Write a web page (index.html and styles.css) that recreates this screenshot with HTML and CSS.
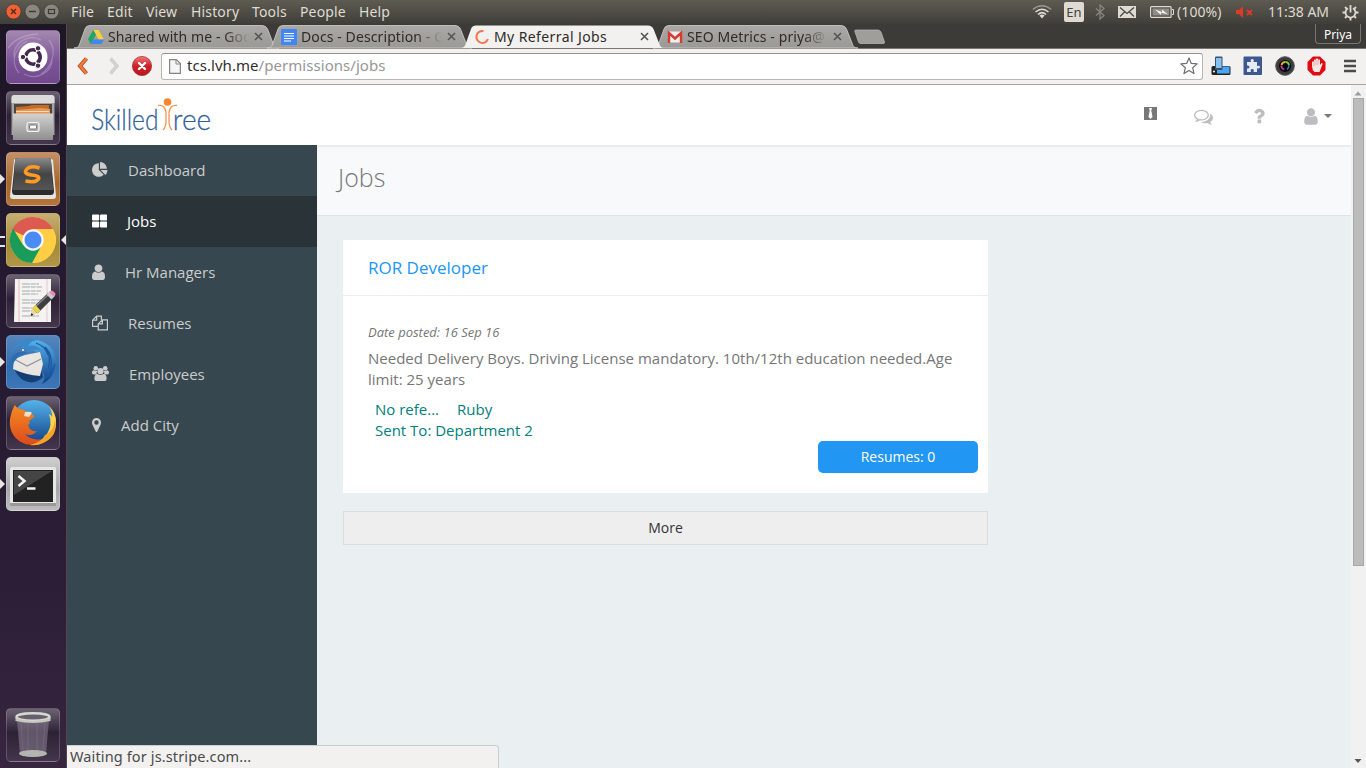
FILE: index.html
```html
<!DOCTYPE html>
<html lang="en">
<head>
<meta charset="utf-8">
<title>My Referral Jobs</title>
<link rel="stylesheet" href="styles.css">
</head>
<body>
<svg class="defs" width="0" height="0">
  <defs>
    <linearGradient id="tabg" x2="0" y2="1"><stop offset="0" stop-color="#a9a8a5"/><stop offset="1" stop-color="#9a9995"/></linearGradient>
    <linearGradient id="silver" x2="0" y2="1"><stop offset="0" stop-color="#d2d2d2"/><stop offset="1" stop-color="#8f8f8f"/></linearGradient>
    <linearGradient id="dark" x2="0" y2="1"><stop offset="0" stop-color="#8a8a8a"/><stop offset=".5" stop-color="#444"/><stop offset="1" stop-color="#555"/></linearGradient>
    <linearGradient id="blue" x2="0" y2="1"><stop offset="0" stop-color="#55b3ea"/><stop offset="1" stop-color="#113f86"/></linearGradient>
    <linearGradient id="fox" x2="0" y2="1"><stop offset="0" stop-color="#f58a24"/><stop offset="1" stop-color="#dd4a1c"/></linearGradient>
    <linearGradient id="red" x2="0" y2="1"><stop offset="0" stop-color="#f07a74"/><stop offset=".5" stop-color="#cc2229"/><stop offset="1" stop-color="#b8161e"/></linearGradient>
    <path id="tab" d="M0 24C4 24 5 22 6 19L11 5Q12 1.500 16 1.500H188Q192 1.500 193.500 5L199 19C200 22 201 24 205 24Z"/>
    <path id="user" d="M1536 1399q0 109-62.500 187t-150.500 78h-854q-88 0-150.500-78t-62.500-187q0-85 8.500-160.500t31.500-152 58.500-131 94-89 134.500-34.500q131 128 313 128t313-128q76 0 134.500 34.500t94 89 58.500 131 31.500 152 8.500 160.500zm-256-887q0 159-112.500 271.500t-271.500 112.500-271.500-112.500-112.500-271.500 112.500-271.500 271.500-112.500 271.500 112.500 112.500 271.500z"/>
  </defs>
</svg>

<header class="menubar">
  <svg class="winbtns" width="60" height="24" viewBox="0 0 60 24">
    <circle cx="13.500" cy="11.500" r="7.500" fill="#ee6238" stroke="#3a2f28" stroke-width=".6"/><path d="M11 9l5 5M16 9l-5 5" stroke="#5a2514" stroke-width="1.400"/>
    <circle cx="32.500" cy="11.500" r="7.500" fill="#8a8780" stroke="#35332e" stroke-width=".6"/><path d="M29 11.500h7" stroke="#3b3a36" stroke-width="1.400"/>
    <circle cx="51.500" cy="11.500" r="7.500" fill="#8a8780" stroke="#35332e" stroke-width=".6"/><rect x="48.500" y="9.500" width="6" height="4" fill="none" stroke="#3b3a36" stroke-width="1.200"/>
  </svg>
  <nav class="menus"><span>File</span><span>Edit</span><span>View</span><span>History</span><span>Tools</span><span>People</span><span>Help</span></nav>
  <div class="tray">
    <svg width="20" height="16" viewBox="0 0 20 16" fill="none" stroke="#dfdbd2" stroke-width="1.500"><path d="M.8 5.500Q10-1.800 19.200 5.500" opacity=".5"/><path d="M3.500 8Q10 2.500 16.500 8M6 10.500Q10 6.700 14 10.500"/><path d="M7.500 11.500L10 14.500l2.500-3Q10 9.500 7.500 11.500z" fill="#dfdbd2" stroke="none"/></svg>
    <span class="lang">En</span>
    <svg class="bt" width="10" height="16" viewBox="0 0 10 16" fill="none" stroke="#8a8881" stroke-width="1.200"><path d="M1 4.500l8 7-4 3.500V1l4 3.500-8 7"/></svg>
    <svg class="mail" width="18" height="12" viewBox="0 0 18 12"><rect width="18" height="12" fill="#dfdbd2"/><path d="M2 1.500l7 6 7-6M2 10.500l4.500-4.500M16 10.500L11.500 6" fill="none" stroke="#4a4842" stroke-width="1.300"/></svg>
    <svg class="batt" width="24" height="12" viewBox="0 0 24 12"><rect x=".6" y=".6" width="20.500" height="10.800" rx="1" fill="none" stroke="#dfdbd2" stroke-width="1.200"/><rect x="2.500" y="2.500" width="16.700" height="7" fill="#8f8d87"/><path d="M22 3.500h1.500v5H22" fill="none" stroke="#dfdbd2"/><path d="M5 3.500l7 2.500V3.500l6 5-7-2V9z" fill="#f4f2ec"/></svg>
    <span class="pct">(100%)</span>
    <svg class="vol" width="18" height="12" viewBox="0 0 18 12"><path d="M0 4h3l4-4v12L3 8H0z" fill="#e03a24"/><path d="M11 4l5 5M16 4l-5 5" stroke="#e03a24" stroke-width="1.800"/></svg>
    <span class="clock">11:38 AM</span>
    <svg class="gear" width="17" height="17" viewBox="0 0 17 17" fill="none" stroke="#dfdbd2"><path d="M6 4.200a5 5 0 1 0 5 0" stroke-width="1.800"/><path d="M8.500 1v7.500" stroke-width="1.800"/><path d="M8.500 14v2.500M.5 8.500h3M13.500 8.500h3M3 3l1.800 1.800M14 3l-1.800 1.800M3 14l1.800-1.800M14 14l-1.800-1.800" stroke-width="1.900"/></svg>
  </div>
</header>

<div class="desktop">
  <aside class="launcher">
    <div class="tile purple"><svg viewBox="0 0 54 54"><g fill="none" stroke="#d9c5e6" opacity=".35" stroke-width="1.300"><path d="M8 27C7 13 22 3 35 10M46 28c1 14-15 23-28 16M13 43C3 31 10 17 21 11M43 10c9 11 2 28-8 34M2 18Q12 5 32 4"/></g><circle cx="27" cy="27" r="14.500" fill="#fff"/><circle cx="27" cy="27" r="7.200" fill="none" stroke="#45284f" stroke-width="3.600" stroke-dasharray="13.600 1.480" stroke-dashoffset="6.800"/><g fill="#45284f" stroke="#fff" stroke-width="1"><circle cx="17" cy="27" r="2.700"/><circle cx="32" cy="18.300" r="2.700"/><circle cx="32" cy="35.700" r="2.700"/></g></svg></div>
    <div class="tile glass"><svg viewBox="0 0 54 54"><path d="M5.500 7q0-3 3-3h37q3 0 3 3v37h-43z" fill="#a4a4a4"/><path d="M5.500 7q0-3 3-3h37q3 0 3 3v5h-43z" fill="#dcdcdc"/><path d="M8 13h38v11H8z" fill="#4f453c"/><path d="M10 16l13-1 2-1h18v9H10z" fill="#c66a27"/><path d="M10 19l24-2 10 1v5H10z" fill="#e49a55"/><path d="M10 20.500h33" stroke="#f4dab5"/><path d="M7 22.500h40V49H7z" fill="url(#silver)"/><rect x="21" y="31.500" width="12" height="9" rx="2" fill="#b0b0b0" stroke="#f3f3f3" stroke-width="1.200"/><rect x="23.500" y="34" width="7" height="4" rx="1" fill="#fff" stroke="#777"/></svg></div>
    <div class="tile brown run"><svg viewBox="0 0 54 54"><path d="M8 8q0-1 1-1h36q1 0 2 1l3 36q0 3-3 3H7q-3 0-3-3z" fill="#e6e4e1"/><path d="M9 9q0-3 3-3h30q3 0 3 3l3 30q0 4-3 4H9q-3 0-3-4z" fill="#2c2c2c"/><path d="M9 9q0-3 3-3h30q3 0 3 3l2 29H7z" fill="url(#dark)"/><path d="M33.500 16Q24 13 20.500 17.500t5.500 5.500 6 4.500-12.500 1.500" fill="none" stroke="#ff9824" stroke-width="3.600"/></svg></div>
    <div class="tile gold run2 focus"><svg viewBox="0 0 54 54"><circle cx="27" cy="27" r="23" fill="#ffd54a"/><path d="M27 27L6 17A23 23 0 0 1 47 16H27z" fill="#dd5a50"/><path d="M7 15.500A23 23 0 0 0 27 50L36 32 27 37 17 32z" fill="#199b5a"/><path d="M36 32L26 50A23 23 0 0 0 47 16H28z" fill="#ffce44"/><circle cx="27" cy="27" r="10.700" fill="#f7f7f7"/><circle cx="27" cy="27" r="8.500" fill="#4b8bf5"/></svg></div>
    <div class="tile glass"><svg viewBox="0 0 54 54"><path d="M9 5h36v43H8z" fill="#f3f3f1"/><path d="M13 5v43" stroke="#f4b6b6"/><path d="M41 5v43" stroke="#e6c8ce"/><path d="M16 10h17M16 13h20M16 17h19M16 20h16M16 26h20M16 29h18M16 34h10M16 37h10M16 42h17" stroke="#c2c2c5" stroke-width="1.500" stroke-dasharray="8 .7 5 .7"/><path d="M24.500 42l2-8 5 5z" fill="#f0d59a"/><path d="M24.500 42l1-3 2 2z" fill="#222"/><path d="M26.500 34L42 19l5 5-15.500 15.500z" fill="#3f3f42"/><path d="M28 34l15-14" stroke="#858589" stroke-width="1.500"/><path d="M26.500 34l3-3 5 5.500-3 3z" fill="#e6d74c"/><path d="M40.500 20.500l3-3 5 5-3 3z" fill="#ccc"/><path d="M43 18q3-3 5 0 3 2 0 5z" fill="#e58bb6"/></svg></div>
    <div class="tile sky run"><svg viewBox="0 0 54 54"><path d="M8 33L34 30 37 42Q28 51 17 45 11 41 8 33z" fill="#173e73"/><path d="M15 12Q20 3 31 5 49 9 50 27 49 43 36 49q4-6 2-10-3-3-2-9 2-10-8-14z" fill="url(#blue)"/><path d="M8 24L19 20l15-3 3 12-3 12Q20 40 7 34z" fill="#e9e5e1"/><path d="M8 24l13 7 14-7" fill="none" stroke="#8f949c" stroke-width="1.300"/><path d="M4 25Q5 11 16 12q4 0 6 6 7-6 14-2Q30 9 22 11 25 5 32 5 18 2 12 8 4 13 4 25z" fill="#3b88c9"/><path d="M5 24Q10 14 22 18q-9 1-14 9-3 5-1 9-4-5-2-12z" fill="#2a6db3"/><path d="M34 10Q47 16 42 34M39 12q10 9 4 30M30 8q9 3 12 12M38 44q8-5 11-15" fill="none" stroke="#1b5aa5" stroke-width="1.300"/><circle cx="17" cy="15" r="1" fill="#fff"/></svg></div>
    <div class="tile glass"><svg viewBox="0 0 54 54"><circle cx="28" cy="26" r="22" fill="url(#blue)"/><path d="M42 9Q53 20 49 33T28 49q10-4 13-11 6-9 2-20 3 1 3 4 1-7-4-13z" fill="#ffd451"/><path d="M9 9Q6 13 4 23c-2 15 9 26 23 26q12 0 18-9-8 5-17 3-6-1-9-5 7 3 12-3-7 1-9-6 3-2 1-4l5-4q1-3-6-3-3-4-6-5-4 1-7-4z" fill="url(#fox)"/><path d="M39 39q9-4 10-16 4 17-12 24-6 3-13 2 12-3 15-10z" fill="#f6a52c"/><path d="M19 16q6-1 7 1l-3 4-5-1z" fill="#f8dcc1"/></svg></div>
    <div class="tile grey run"><svg viewBox="0 0 54 54"><rect x="4" y="10" width="46" height="38" rx="2" fill="#e7e7e7"/><path d="M4 46h46v3H4z" fill="#999"/><rect x="7" y="13" width="40" height="32" fill="#222"/><path d="M8 14h38L8 38z" fill="#454545"/><path d="M12.500 19l6 5-6 5M21 31.500h8.500" fill="none" stroke="#f3f3f3" stroke-width="2.500"/></svg></div>
    <div class="tile glass trash"><svg viewBox="0 0 54 54"><path d="M11 12h32l-3 34q-13 5-26 0z" fill="#83788a" opacity=".6"/><path d="M15 13l2 30M22 14v30M31 14v30M39 13l-2 30" stroke="#a69cac" opacity=".2"/><ellipse cx="27" cy="45.500" rx="14" ry="3.500" fill="#b4b4b0"/><ellipse cx="27" cy="9" rx="16.500" ry="3.700" fill="#67606c" stroke="#d8d8d3" stroke-width="2.500"/><path d="M9.500 10q17 6 35 0v3q-17 4-35 0z" fill="#c7c7c1"/></svg></div>
  </aside>

  <main class="browser">
    <div class="tabs">
      <div class="tab"><svg class="shape" width="205" height="25"><use href="#tab" fill="url(#tabg)" stroke="#d2d1ce" stroke-width=".8"/></svg>
        <svg class="fav" width="16" height="16" viewBox="0 0 16 16"><path d="M5.300 1h5.300L16 10.500h-5.300z" fill="#fdcf3c"/><path d="M5.300 1L8 5.700 2.700 15 0 10.300z" fill="#1fa564"/><path d="M5.300 10.500H16L13.300 15H2.700z" fill="#4285f4"/></svg>
        <span class="t t1">Shared with me - Goo</span><svg class="x" width="9" height="9" viewBox="0 0 9 9"><path d="M1 1l7 7M8 1L1 8"/></svg></div>
      <div class="tab"><svg class="shape" width="205" height="25"><use href="#tab" fill="url(#tabg)" stroke="#d2d1ce" stroke-width=".8"/></svg>
        <svg class="fav" width="16" height="16" viewBox="0 0 16 16"><rect width="16" height="16" rx="1" fill="#4285f4"/><path d="M3 4.500h10M3 7h10M3 9.500h10M3 12h7" stroke="#fff" stroke-width="1.200"/></svg>
        <span class="t t2">Docs - Description - G</span><svg class="x" width="9" height="9" viewBox="0 0 9 9"><path d="M1 1l7 7M8 1L1 8"/></svg></div>
      <div class="tab active"><svg class="shape" width="205" height="25"><use href="#tab" fill="#f2f1f0"/></svg>
        <svg class="fav" width="16" height="16" viewBox="0 0 16 16"><path d="M9.500 2A6 6 0 1 0 14 10" fill="none" stroke="#f4764a" stroke-width="2"/></svg>
        <span class="t t3">My Referral Jobs</span><svg class="x" width="9" height="9" viewBox="0 0 9 9"><path d="M1 1l7 7M8 1L1 8"/></svg></div>
      <div class="tab under"><svg class="shape" width="205" height="25"><use href="#tab" fill="url(#tabg)" stroke="#d2d1ce" stroke-width=".8"/></svg>
        <svg class="fav" width="16" height="16" viewBox="0 0 16 16"><rect x="1" y="2.500" width="14" height="11" fill="#eee"/><path d="M2 14V4l6 5.500L14 4v10" fill="none" stroke="#d93a30" stroke-width="2.400"/></svg>
        <span class="t t4">SEO Metrics - priya@</span><svg class="x" width="9" height="9" viewBox="0 0 9 9"><path d="M1 1l7 7M8 1L1 8"/></svg></div>
      <svg class="newtab" width="32" height="15"><path d="M1.500 1H24Q26 1 27 3l3.500 10Q31 14.500 29 14.500H7Q5 14.500 4.500 13L.8 2.500Q.5 1 1.500 1z" fill="#9f9e9a" stroke="#bdbcb9" stroke-width=".7"/></svg>
      <div class="profile">Priya</div>
    </div>
    <div class="toolbar">
      <svg class="back" width="12" height="18" viewBox="0 0 12 18"><path d="M9.500 1.500L3 9l6.500 7.500" fill="none" stroke="#b9481c" stroke-width="4"/><path d="M9.500 1.500L3 9l6.500 7.500" fill="none" stroke="#f07a3e" stroke-width="2.400"/></svg>
      <svg class="fwd" width="12" height="18" viewBox="0 0 12 18"><path d="M2.500 1.500L9 9l-6.500 7.500" fill="none" stroke="#d3d1ce" stroke-width="3.500"/></svg>
      <svg class="stop" width="20" height="20" viewBox="0 0 20 20"><circle cx="10" cy="10" r="9.600" fill="url(#red)" stroke="#a81c22" stroke-width=".7"/><path d="M7 7l6 6M13 7l-6 6" stroke="#fff" stroke-width="2.400" stroke-linecap="round"/></svg>
      <div class="omni">
        <svg width="12" height="15" viewBox="0 0 12 15"><path d="M.6 .6h6.800L11.400 4.600V14.400H.6z" fill="#f5f5f5" stroke="#858585" stroke-width="1.200"/><path d="M7 .6V5h4.400" fill="none" stroke="#858585"/></svg>
        <span class="url">tcs.lvh.me<i>/permissions/jobs</i></span>
        <svg class="star" width="18" height="18" viewBox="0 0 18 18"><path d="M9 1l2.300 5.400 5.900.5-4.500 3.900L14 16.600 9 13.500l-5 3.100 1.300-5.800L.8 6.900l5.900-.5z" fill="#fff" stroke="#6d6d6d" stroke-width="1.200" stroke-linejoin="round"/></svg>
      </div>
      <div class="exts">
        <svg width="20" height="20" viewBox="0 0 20 20"><rect x=".5" y="10" width="19" height="9" rx="1.500" fill="#222"/><rect x="6" y="10.500" width="12.500" height="7" fill="#4aa5f5"/><rect x="4" y=".5" width="7.500" height="13.500" rx="1" fill="#3c5268"/><rect x="5" y="2" width="5.500" height="10" fill="#86c1f5"/><circle cx="3" cy="15.500" r="1" fill="#fff"/></svg>
        <svg width="20" height="20" viewBox="0 0 20 20"><rect x=".5" y=".5" width="18.500" height="18.500" rx="1" fill="#3d5791"/><path d="M4 6h4q-1-3 1.200-3T10.500 6H14v4q3-1 3 1t-3 1.200V16h-3.500q1-3-1.300-3T8 16H4v-3.500q2.500.5 2.500-1.500T4 9.500z" fill="#e5eaf3"/></svg>
        <svg width="20" height="20" viewBox="0 0 20 20"><circle cx="10" cy="10" r="9.300" fill="#3c3c3c" stroke="#555" stroke-width="1"/><circle cx="10" cy="10" r="6" fill="#060606"/><path d="M6.500 9a4 4 0 0 1 4-3" fill="none" stroke="#e0b13a" stroke-width="1.800"/><path d="M10.500 6q3 0 3.500 3" fill="none" stroke="#7ccf3a" stroke-width="1.800"/><path d="M14 9q0 3-2 4.500" fill="none" stroke="#2a7fd0" stroke-width="1.500"/><path d="M6.300 9.500q0 3 3 4" fill="none" stroke="#cd2e9f" stroke-width="1.800"/></svg>
        <svg width="20" height="20" viewBox="0 0 20 20"><path d="M6 .5h7L18.500 6v8L13 19.500H6L.5 14V6z" fill="#e00b12"/><path d="M5 10V6q1-1.500 2 0V4q1-1.500 2 0V3q1-1.500 2 0v1q1-1.500 2 0v5l1.500-2q1.500 0 1 1.200L12.500 16h-5Q5 14 5 10z" fill="#f7e6e6"/><path d="M7 5v5M9 4v5M11 4v5" stroke="#e39999" stroke-width=".7"/></svg>
        <svg width="14" height="14" viewBox="0 0 14 14"><path d="M1 2h12M1 7h12M1 12h12" stroke="#4b4b4b" stroke-width="2.700"/></svg>
      </div>
    </div>
    <div class="view">
      <div class="page">
        <header class="apphead">
          <svg class="logo" width="122" height="36" viewBox="0 0 122 36"><g class="word" transform="scale(.8 1)"><text x="-1" y="33" textLength="84" lengthAdjust="spacingAndGlyphs">Skilled</text><text x="101" y="33" textLength="48" lengthAdjust="spacingAndGlyphs">ree</text></g><circle cx="75.500" cy="5" r="3.800" fill="#f5862e"/><path d="M66 8.500q7-1 8 7V24q0 6-3 9M85 8.500q-7-1-8 7V24q0 6 3 9" fill="none" stroke="#f79450" stroke-width="1.300"/></svg>
          <nav class="actions">
            <svg width="13" height="13" viewBox="0 0 13 13"><rect width="13" height="13" fill="#777"/><path d="M5 1h3l-.7 2.500L8.500 10l-2 2-2-2 1.200-6.500z" fill="#fff"/></svg>
            <svg class="chat" width="19" height="19" viewBox="0 0 1792 1792" fill="#bdbdc1"><path d="M704 384q-153 0-286 52t-211.500 141-78.500 191q0 82 53 158t149 132l97 56-35 84q34-20 62-39l44-31 53 10q78 14 153 14 153 0 286-52t211.500-141 78.500-191-78.500-191-211.500-141-286-52zm0-128q191 0 353.500 68.500t256.500 186.500 94 257-94 257-256.500 186.500-353.500 68.500q-86 0-176-16-124 88-278 128-36 9-86 16h-3q-11 0-20.500-8t-11.500-21q-1-3-1-6.500t.5-6.500 2-6l2.500-5 3.500-5.500 4-5 4.500-5 4-4.500q5-6 23-25t26-29.500 22.500-29 25-38.500 20.500-44q-124-72-195-177t-71-224q0-139 94-257t256.500-186.500 353.500-68.500zm822 1169q10 24 20.500 44t25 38.500 22.500 29 26 29.500 23 25q1 1 4 4.500t4.500 5 4 5 3.500 5.500l2.500 5 2 6 .5 6.500-1 6.500q-3 14-13 22t-22 7q-50-7-86-16-154-40-278-128-90 16-176 16-271 0-472-132 58 4 88 4 161 0 309-45t264-129q125-92 192-212t67-254q0-77-23-152 129 71 204 178t75 230q0 120-71 224.500t-195 176.500z"/></svg>
            <svg class="help" width="20" height="20" viewBox="0 0 1792 1792" fill="#bdbdc1"><path d="M1088 1256v240q0 16-12 28t-28 12h-240q-16 0-28-12t-12-28v-240q0-16 12-28t28-12h240q16 0 28 12t12 28zm316-600q0 54-15.500 101t-35 76.500-55 59.500-57.500 43.500-61 35.500q-41 23-68.500 65t-27.500 67q0 17-12 32.500t-28 15.500h-240q-15 0-25.500-18.500t-10.500-37.500v-45q0-83 65-156.500t143-108.500q59-27 84-56t25-76q0-42-46.500-74t-107.500-32q-65 0-108 29-35 25-107 115-13 16-31 16-12 0-25-8l-164-125q-13-10-15.500-25t5.500-28q160-266 464-266 80 0 161 31t146 83 106 127.500 41 158.500z"/></svg>
            <svg class="me" width="20" height="19" viewBox="0 0 1792 1792" fill="#bdbdc1"><use href="#user"/></svg>
            <svg class="caret" width="8" height="4"><path d="M0 0h8L4 4z" fill="#777"/></svg>
          </nav>
        </header>
        <div class="body">
          <nav class="side">
            <a><svg width="16" height="16" viewBox="0 0 1792 1792"><path d="M768 890l546 546q-106 108-247.500 168t-298.500 60q-209 0-385.500-103t-279.500-279.500-103-385.500 103-385.500 279.500-279.500 385.500-103v762zm187 6h773q0 157-60 298.500t-168 247.500zm709-128h-768v-768q209 0 385.500 103t279.500 279.500 103 385.500z"/></svg>Dashboard</a>
            <a class="on"><svg width="15" height="16" viewBox="0 0 15 16"><rect y="1.500" width="7.200" height="6" rx="1"/><rect x="8" y="1.500" width="7.200" height="6" rx="1"/><rect y="8.500" width="7.200" height="6" rx="1"/><rect x="8" y="8.500" width="7.200" height="6" rx="1"/></svg>Jobs</a>
            <a><svg width="13" height="16" viewBox="256 90 1280 1576"><use href="#user"/></svg>Hr Managers</a>
            <a><svg width="16" height="16" viewBox="0 0 17 16"><path d="M6.500 11.500H.6V5L5 .6h5v4M5 .6V5H.6M11 4.600h5.400v10.800H6.600V9zM11 4.600V9H6.600" fill="none" stroke="#ccc" stroke-width="1.300"/></svg>Resumes</a>
            <a><svg width="17" height="17" viewBox="0 0 18 17"><circle cx="4" cy="3" r="2.400"/><circle cx="14" cy="3" r="2.400"/><path d="M0 8Q0 5 2 5q2 1.400 4 .5-2 2-.8 4H2Q0 9.500 0 8zM18 8q0-3-2-3-2 1.400-4 .5 2 2 .8 4H16q2 0 2-1.500z"/><circle cx="9" cy="6" r="3.300"/><path d="M2.500 14q0-5 3.500-5 3 2.200 6 0 3.500 0 3.500 5 0 2.500-2 2.500h-9q-2 0-2-2.500z"/></svg>Employees</a>
            <a><svg width="9" height="16" viewBox="0 0 9 16"><path fill-rule="evenodd" d="M4.500 1A4.500 4.500 0 0 1 9 5.500q0 1.300-.5 2.300L5.300 14.500q-.8 1-1.600 0L.5 7.800Q0 7 0 5.500A4.500 4.500 0 0 1 4.500 1zm0 2.300a2.200 2.200 0 1 0 0 4.400 2.200 2.200 0 0 0 0-4.400z"/></svg>Add City</a>
          </nav>
          <section class="content">
            <h1>Jobs</h1>
            <div class="inner">
              <article class="card">
                <h2>ROR Developer</h2>
                <div class="cardbody">
                  <p class="date">Date posted: 16 Sep 16</p>
                  <p class="desc">Needed Delivery Boys. Driving License mandatory. 10th/12th education needed.Age limit: 25 years</p>
                  <div class="meta"><div><span>No refe...</span><span class="skill">Ruby</span></div><div>Sent To: Department 2</div></div>
                  <button class="resumes">Resumes: 0</button>
                </div>
              </article>
              <button class="more">More</button>
            </div>
          </section>
        </div>
      </div>
      <div class="scroll"><svg width="15" height="13"><path d="M3.500 10.500h7L7 6.500z" fill="#9a9a9a"/></svg><div class="thumb"></div><svg class="down" width="15" height="13"><path d="M3.500 4h7L7 8z" fill="#555"/></svg></div>
      <div class="status">Waiting for js.stripe.com...</div>
    </div>
  </main>
</div>
</body>
</html>
```
FILE: styles.css
```css
* { box-sizing: border-box; }
html, body { margin: 0; height: 768px; overflow: hidden; }
body { display: flex; flex-direction: column; font-family: "Open Sans", "Noto Sans", sans-serif; }
svg { display: block; flex: none; }
.defs { position: absolute; }

.menubar { height: 24px; flex: none; display: flex; background: linear-gradient(#5e5b51, #3f3e39); color: #dfdbd2; font: 14px/24px "Noto Sans", sans-serif; white-space: nowrap; }
.winbtns { margin-right: 11px; }
.menus { display: grid; grid-template-columns: 36px 39px 45px 61px 48px 59px 40px; letter-spacing: .15px; }
.tray { margin-left: auto; display: flex; align-items: center; padding-right: 7px; }
.lang { width: 20px; height: 20px; margin-left: 12px; border-radius: 2px; background: #dfdbd2; color: #45433e; font-size: 13px; line-height: 20px; text-align: center; }
.bt { margin-left: 11px; }
.mail { margin-left: 13px; }
.batt { margin-left: 14px; }
.pct { width: 49px; margin-left: 3px; font-size: 14px; letter-spacing: .1px; }
.vol { margin-left: 10px; }
.clock { width: 64px; margin-left: 14px; }
.gear { margin-left: 10px; }

.desktop { flex: 1; display: flex; min-height: 0; }
.launcher { width: 67px; flex: none; display: flex; flex-direction: column; gap: 7px; padding: 6px 0 6px 6px; background: linear-gradient(#1d1624, #241a30 30%, #2a1d35 70%, #382540); border-right: 1px solid #53464f; }
.tile { width: 54px; height: 54px; flex: none; position: relative; border-radius: 5px; border: 1px solid rgba(255,255,255,.18); }
.tile > svg { width: 54px; height: 54px; margin: -1px; }
.purple { background: linear-gradient(#a488b0, #7c5497 60%, #71488d); }
.glass { background: linear-gradient(#6b6272, #2d2136 45%, #44364c); }
.brown { background: linear-gradient(#c3906a, #a5652b 60%, #b4763c); }
.gold { background: linear-gradient(#c4ae72, #a58b39 60%, #b29846); }
.sky { background: linear-gradient(#5586bd, #336fb0 60%, #3b77b7); }
.grey { background: linear-gradient(#cecece, #a6a6a6 60%, #bdbdbd); }
.trash { margin-top: auto; }
.run::before, .run2::before, .focus::after { content: ""; position: absolute; top: 21px; border: 5px solid transparent; }
.run::before { left: -7px; border-left-color: #e8e6e3; border-right-width: 0; }
.run2::before { left: -7px; top: 22px; width: 5px; height: 7px; border: solid #e8e6e3; border-width: 2px 0; }
.focus::after { left: 54px; border-right-color: #e8e6e3; border-left-width: 0; }

.browser { flex: 1; display: flex; flex-direction: column; min-width: 0; }
.tabs { height: 25px; flex: none; display: flex; padding: 0 5px 0 7px; background: #3c3b37; border-bottom: 1px solid #777671; }
.tab { width: 205px; height: 25px; flex: none; position: relative; display: flex; align-items: center; padding-left: 14px; }
.tab + .tab { margin-left: -12px; }
.tab.active { z-index: 2; }
.shape { position: absolute; left: 0; top: 0; }
.fav, .x { position: relative; }
.t { position: relative; width: 141px; margin: 0 5px 0 4px; white-space: nowrap; font: 14px/24px "Noto Sans", sans-serif; letter-spacing: .1px; color: #2f2b28; }
.t3 { letter-spacing: .4px; }
.t1, .t2, .t4 { -webkit-mask-image: linear-gradient(90deg, #000 116px, transparent 141px); mask-image: linear-gradient(90deg, #000 116px, transparent 141px); }
.x { fill: none; stroke: #555; stroke-width: 1.600; margin-top: -1px; }
.newtab { margin: 5px 0 0 -4px; }
.profile { width: 46px; height: 20px; margin-left: auto; border: 1px solid #77756f; border-top: 0; border-radius: 0 0 4px 4px; color: #fff; font: 12px/22px "Noto Sans", sans-serif; text-align: center; }

.toolbar { height: 36px; flex: none; display: flex; align-items: center; padding: 0 9px 2px 10px; background: #f2f1f0; border-bottom: 1px solid #a6a5a3; }
.fwd { margin-left: 19px; }
.stop { margin-left: 12px; }
.omni { flex: 1; height: 27px; display: flex; align-items: center; margin: 1px 0 0 9px; padding: 0 4px 0 7px; border: 1px solid #b9b7b3; border-top-color: #929190; border-radius: 3px; background: #fff; }
.url { margin: -2px 0 0 6px; font: 15px/24px "Noto Sans", sans-serif; color: #2f2f2f; white-space: nowrap; letter-spacing: .05px; }
.url i { font-style: normal; color: #979797; }
.star { margin-left: auto; }
.exts { display: flex; align-items: center; gap: 12px; margin-left: 8px; }
.exts svg:last-child { margin-left: 4px; }

.view { flex: 1; display: flex; min-height: 0; position: relative; }
.page { width: 1284px; display: flex; flex-direction: column; background: #fff; }
.apphead { height: 60px; flex: none; display: flex; padding: 12px 19px 0 25px; }
.word { font-family: Lato, sans-serif; font-size: 29px; font-weight: 300; fill: #2f6299; stroke: #2f6299; stroke-width: .25px; }
.actions { margin-left: auto; display: flex; height: 38px; align-items: center; }
.actions svg:first-child { margin-top: -5px; }
.chat { margin-left: 37px; }
.help { margin-left: 36px; margin-top: -1px; }
.me { margin-left: 32px; }
.caret { margin-left: 3px; }
.body { flex: 1; display: flex; min-height: 0; }
.side { width: 250px; flex: none; background: #37474f; }
.side a { height: 51px; display: flex; align-items: center; gap: 20px; padding: 0 0 1px 25px; font-size: 15px; line-height: 20px; color: #ccc; fill: #ccc; }
.side a.on { background: #293338; color: #fff; fill: #fff; }
.side svg { margin-top: -1px; }
.content { flex: 1; background: #eaeff2; }
h1 { height: 71px; margin: 0; padding: 11px 0 0 21px; background: #f7f9fa; border-bottom: 1px solid #dce5e6; box-shadow: inset 0 2px 1px #ebeced; color: #777; font-size: 25px; line-height: 42px; font-weight: 300; }
.inner { width: 645px; margin: 24px 0 0 26px; }
.card { height: 253px; background: #fff; }
h2 { height: 56px; margin: 0; padding-left: 25px; border-bottom: 1px solid #eee; color: #2196f3; font-size: 17px; line-height: 56px; font-weight: 400; }
.cardbody { padding: 26px 25px 0; color: #767676; }
.cardbody p { margin: 0; }
.date { font-size: 13px; line-height: 21px; font-style: italic; }
.desc { padding-top: 5px; font-size: 15px; line-height: 21px; letter-spacing: .01px; }
.meta { padding: 9px 0 0 7px; color: #00807c; font-size: 15px; line-height: 21px; }
.skill { margin-left: 18px; }
button { display: block; font-family: inherit; font-size: 14px; padding: 0 0 2px; }
.resumes { width: 160px; height: 32px; margin: 0 -15px 0 auto; border: 0; border-radius: 5px; background: #2196f3; color: #fff; }
.more { width: 645px; height: 34px; margin-top: 18px; border: 1px solid #dadcdd; background: #eee; color: #333; }

.scroll { width: 15px; display: flex; flex-direction: column; background: #f1f1f1; }
.thumb { width: 11px; height: 468px; margin: 0 0 0 2px; background: #bcbcbc; border: 1px solid #a8a8a8; }
.down { margin-top: auto; }
.status { position: absolute; left: 0; bottom: 0; width: 432px; height: 23px; padding-left: 3px; background: #f2f1f0; border: solid #c8ced0; border-width: 1px 1px 0 0; border-radius: 0 4px 0 0; color: #4a4a4a; font: 14.500px/20px "Noto Sans", sans-serif; letter-spacing: .13px; }
```
